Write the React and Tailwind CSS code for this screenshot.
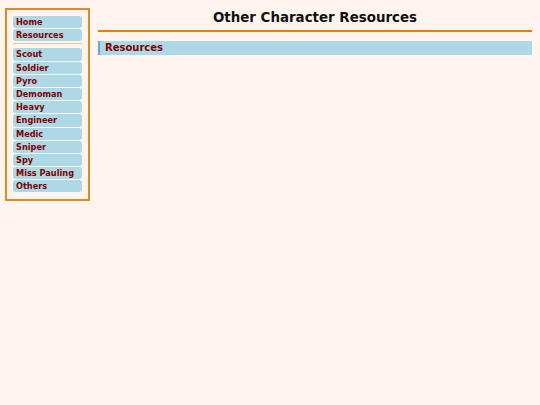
import React from "react";

const top = ["Home", "Resources"];
const chars = ["Scout", "Soldier", "Pyro", "Demoman", "Heavy", "Engineer", "Medic", "Sniper", "Spy", "Miss Pauling", "Others"];

function Item({ label }) {
  return (
    <div className="h-[12.2px] mb-[1px] rounded-[3px] bg-[#add8e6] pl-[3px] pt-[1px] text-[8.2px] leading-[11px] font-bold text-[#800000]">
      {label}
    </div>
  );
}

export default function App() {
  return (
    <div
      className="min-h-[405px] w-full bg-[#fff5ee] flex items-start"
      style={{ fontFamily: '"DejaVu Sans", Verdana, sans-serif' }}
    >
      <div className="ml-[5px] mt-[8px] w-[85px] shrink-0 border-2 border-[#df8a22] px-[6px] pt-[6px] pb-[6px]">
        {top.map((t) => (
          <Item key={t} label={t} />
        ))}
        <div className="mt-[2px] mb-[4px] h-px bg-[#f5c38c]" />
        {chars.map((t) => (
          <Item key={t} label={t} />
        ))}
      </div>
      <div className="ml-[8px] mr-[8px] flex-1">
        <div className="h-[32px] border-b-2 border-[#e0800a] pt-[10px] text-center text-[13.4px] leading-[16px] font-bold text-[#111]">
          Other Character Resources
        </div>
        <div className="mt-[9px] h-[14px] border-l-2 border-[#6fa3d6] bg-[#add8e6] pl-[5px] text-[10px] leading-[14px] font-bold text-[#800000]">
          Resources
        </div>
      </div>
    </div>
  );
}
